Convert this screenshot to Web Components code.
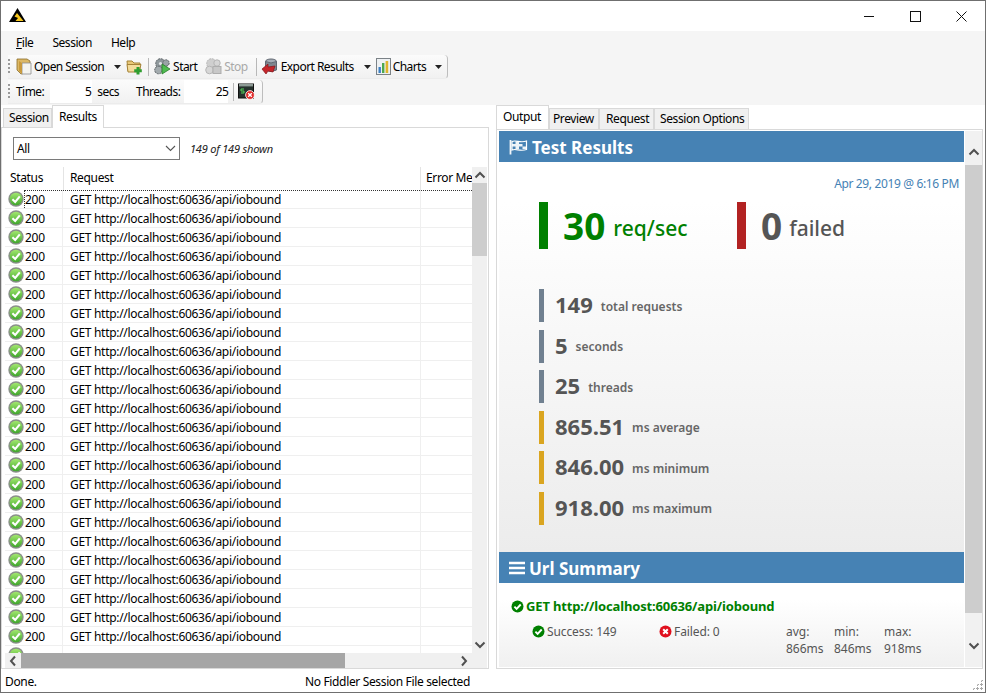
<!DOCTYPE html>
<html><head><meta charset="utf-8"><title>West Wind WebSurge</title>
<style>
html,body{margin:0;padding:0;background:#fff;font:12px "Noto Sans","Open Sans",sans-serif;color:#000}
</style></head><body>
<app-window></app-window>
<script>
const chev=(d,c='#505050',s=2)=>{const p={up:'M1.5 8.5 L6 4 L10.5 8.5',down:'M1.5 3.5 L6 8 L10.5 3.5',left:'M8 1.5 L4 6 L8 10.5',right:'M4 1.5 L8 6 L4 10.5'}[d];return `<svg width="12" height="12" viewBox="0 0 12 12"><path d="${p}" fill="none" stroke="${c}" stroke-width="${s}"/></svg>`};
const ICONS={
logo:`<svg width="17" height="16" viewBox="0 0 17 16"><path d="M8.5 1 L17 15 H0 Z" fill="#000"/><path d="M8 6 L14.5 14 H6.5 L9 11 L5.5 9.5 Z" fill="#f7c71e"/></svg>`,
open:`<svg width="16" height="17" viewBox="0 0 16 17"><path d="M1 1 H11 L14 3 V14 L5 16 L1 12 Z" fill="#dcb865" stroke="#8a6d2a" stroke-width=".8"/><path d="M6 5 H15 V16 H6 Z" fill="#f4f4ef" stroke="#8d8d8d" stroke-width=".8"/><path d="M3 3 L6 5 V16 L3 13 Z" fill="#c99a3c"/></svg>`,
add:`<svg width="17" height="16" viewBox="0 0 17 16"><path d="M1 2 H6 L8 4 H14 V12 H2 Z" fill="#e9c877" stroke="#a58338"/><path d="M1 5.5 H15 L13 13 H2 Z" fill="#f4dc9b" stroke="#a58338"/><path d="M12 8 V15.5 M8.2 11.7 H15.8" stroke="#2f9e2f" stroke-width="3"/></svg>`,
start:`<svg width="17" height="17" viewBox="0 0 17 17"><circle cx="6.5" cy="5.5" r="4.8" fill="#8f989c" stroke="#5b6265" stroke-dasharray="2 .8"/><circle cx="6.5" cy="5.5" r="1.6" fill="#e3e6e8"/><circle cx="4.5" cy="12" r="3.8" fill="#a3abae" stroke="#5b6265" stroke-dasharray="2 .8"/><circle cx="12" cy="5" r="3.2" fill="#9aa3a6" stroke="#5b6265" stroke-dasharray="2 .8"/><path d="M8 6 L16 11 L8 16 Z" fill="#4fbb50" stroke="#2a7d2b" stroke-width=".8"/></svg>`,
stop:`<svg width="17" height="17" viewBox="0 0 17 17"><circle cx="6.5" cy="5.5" r="4.8" fill="#cfcfcf" stroke="#b5b5b5" stroke-dasharray="2 .8"/><circle cx="12" cy="5" r="3.2" fill="#d6d6d6" stroke="#b5b5b5"/><circle cx="4.5" cy="12" r="3.8" fill="#d6d6d6" stroke="#b5b5b5"/><rect x="8" y="8.5" width="8" height="7" fill="#c8c8c8" stroke="#adadad"/></svg>`,
exp:`<svg width="17" height="17" viewBox="0 0 17 17"><ellipse cx="10" cy="3.5" rx="5.5" ry="2.5" fill="#a7aeb7" stroke="#5f6670"/><path d="M4.5 3.5 V12 Q10 15 15.5 12 V3.5 Q10 6.5 4.5 3.5" fill="#7f8790" stroke="#5f6670"/><path d="M1 11 L7 6 V9 L14 8 L12 14 L7 13 L5 16 Z" fill="#c4262b" stroke="#86161a" stroke-width=".7"/></svg>`,
charts:`<svg width="15" height="17" viewBox="0 0 15 17"><rect x=".5" y=".5" width="14" height="16" fill="#eef1f3" stroke="#7b8287"/><rect x="2.5" y="9" width="2.4" height="6" fill="#3b7fc4"/><rect x="6" y="5" width="2.4" height="10" fill="#4da84d"/><rect x="9.6" y="3" width="2.6" height="12" fill="#e0b52c"/></svg>`,
term:`<svg width="17" height="17" viewBox="0 0 17 17"><rect x=".5" y="1" width="15" height="14" fill="#26312d" stroke="#111"/><rect x="1" y="1" width="14" height="2.4" fill="#8d9a95"/><path d="M6 6 H3 V8 H6 V10 H3" stroke="#53d35a" fill="none"/><circle cx="12" cy="12" r="4.4" fill="#e02a2a" stroke="#fff" stroke-width=".8"/><path d="M10.2 10.2 L13.8 13.8 M13.8 10.2 L10.2 13.8" stroke="#fff" stroke-width="1.3"/></svg>`,
ok:`<svg width="16" height="16" viewBox="0 0 16 16"><defs><linearGradient id="g" x1="0" y1="0" x2="0" y2="1"><stop offset="0" stop-color="#a3e86f"/><stop offset="1" stop-color="#3fa62c"/></linearGradient></defs><circle cx="8" cy="8" r="7.7" fill="#8a8f8a"/><circle cx="8" cy="8" r="6.3" fill="url(#g)"/><path d="M4.4 8.2 L7.2 11 L11.8 5.4" fill="none" stroke="#fff" stroke-width="2.1"/></svg>`,
flag:`<svg width="19" height="16" viewBox="0 0 19 16"><path d="M1.5 1 V15.5" stroke="#f2f6fa" stroke-width="1.8"/><path d="M3 2.5 C7 .5 11 4.5 17.5 2 V10.5 C11 13 7 9 3 11 Z" fill="#4682b4" stroke="#fff" stroke-width="1.2"/><path d="M6.5 2.5 H10 V5 H13.5 V7.5 H17 V10 H13.5 V7.5 H10 V10 H6.5 V7.5 H3 V5 H6.5 Z" fill="#fff" opacity=".9"/></svg>`,
bars:`<svg width="16" height="14" viewBox="0 0 16 14"><path d="M0 2 H16 M0 7 H16 M0 12 H16" stroke="#fff" stroke-width="2.6"/></svg>`,
chk:c=>`<svg width="13" height="13" viewBox="0 0 13 13"><circle cx="6.5" cy="6.5" r="6" fill="${c}"/><path d="M3.4 6.6 L5.6 8.8 L9.7 4.5" fill="none" stroke="#fff" stroke-width="1.9"/></svg>`,
no:`<svg width="13" height="13" viewBox="0 0 13 13"><circle cx="6.5" cy="6.5" r="6" fill="#e0101e"/><path d="M4.2 4.2 L8.8 8.8 M8.8 4.2 L4.2 8.8" stroke="#fff" stroke-width="2"/></svg>`
};
function def(name,css,html,init){
  customElements.define(name,class extends HTMLElement{
    constructor(){super();const s=this.attachShadow({mode:'open'});
      s.innerHTML=`<style>${css}</style>`+(typeof html==='function'?html(this):html);
    }
    connectedCallback(){if(init)init(this)}
  });
}

def('ui-icon',':host{display:inline-flex;flex:none;align-items:center;justify-content:center}',
  h=>{const n=h.getAttribute('name');const c=h.getAttribute('color');return typeof ICONS[n]==='function'?ICONS[n](c):ICONS[n]});

def('title-bar',`:host{display:flex;height:30px;flex:none;background:#fff;align-items:center;position:relative}
.logo{margin:-3px 0 0 8px;display:flex}.sp{flex:1}
.b{width:46px;height:30px;display:flex;align-items:center;justify-content:center}`,
`<div class="logo"><ui-icon name="logo"></ui-icon></div><div class="sp"></div>
<div class="b"><svg width="10" height="10"><path d="M0 5.5H10" stroke="#111"/></svg></div>
<div class="b"><svg width="11" height="11"><rect x=".5" y=".5" width="10" height="10" fill="none" stroke="#111"/></svg></div>
<div class="b" style="margin-right:1px"><svg width="11" height="11"><path d="M.5 .5L10.5 10.5M10.5 .5L.5 10.5" stroke="#111"/></svg></div>`);

def('menu-bar',`:host{display:flex;height:24px;flex:none;background:#f5f5f5;align-items:center;padding:0 0 2px 15px;box-sizing:border-box;letter-spacing:-.45px}
span{margin-right:19px} u{text-decoration:underline}`,
`<span><u>F</u>ile</span><span>Session</span><span>Help</span>`);

def('tool-strip',`:host{display:flex;height:24px;box-sizing:border-box;align-items:center;background:linear-gradient(#fbfbfb,#f1f1f1);border-right:1px solid #bdbdbd;border-bottom:1px solid #ececec;border-radius:0 4px 4px 0;padding-left:8px;margin-left:7px;position:relative;letter-spacing:-.55px}
:host::before{content:"";position:absolute;left:0;top:4px;bottom:4px;width:2px;background:repeating-linear-gradient(#9a9a9a 0 2px,transparent 2px 4px)}`,
`<slot></slot>`);

def('tool-btn',`:host{display:inline-flex;align-items:center;flex:none;white-space:nowrap;height:22px}
.t{margin-left:var(--gap,3px)}`,
h=>`<ui-icon name="${h.getAttribute('icon')}"></ui-icon><span class="t" style="${h.hasAttribute('disabled')?'color:#a9a9a9':''}"><slot></slot></span>${h.hasAttribute('drop')?'<svg width="7" height="4" style="margin-left:'+h.getAttribute('drop')+'px"><path d="M0 0H7L3.5 4Z" fill="#222"/></svg>':''}`);

def('tool-sep',`:host{display:inline-block;flex:none;width:1px;height:18px;background:#b8b8b8}`,``);

def('num-box',`:host{display:inline-block;flex:none;background:#fff;height:23px;line-height:23px;text-align:right;box-sizing:border-box;padding-right:1px}`,`<slot></slot>`);

def('tab-btn',`:host{display:block;flex:none;box-sizing:border-box;border:1px solid #d9d9d9;border-bottom:0;background:#f0f0f0;height:21px;line-height:20px;padding:0 0 0 5px;margin-top:3px;letter-spacing:-.4px}
:host([active]){background:#fff;height:24px;margin-top:0;line-height:21px;position:relative;z-index:2;margin-bottom:-1px;padding-left:6px}`,`<slot></slot>`);

def('scroll-v',`:host{display:flex;flex-direction:column;flex:none;width:var(--w,15px);background:var(--bg,#f0f0f0)}
.a{height:var(--ah,16px);display:flex;align-items:center;justify-content:center;flex:none;box-sizing:border-box}
.u{padding-top:var(--off,0)}.d{padding-bottom:var(--off,0)}
.th{background:#cdcdcd;flex:none}.sp{flex:1}`,
h=>`<div class="a u">${chev('up')}</div><div class="th" style="height:${h.getAttribute('thumb')}px"></div><div class="sp"></div><div class="a d">${chev('down')}</div>`);

def('status-row',`:host{display:grid;grid-template-columns:58px 357px 52px;height:19px;box-sizing:border-box;border-bottom:1px solid #efefef;align-items:center;white-space:nowrap;letter-spacing:-.3px;position:relative}
.s{display:flex;align-items:center;padding-left:3px;gap:1px;height:18px;box-sizing:border-box;border-right:1px solid #efefef}
.r{padding:1px 0 0 7px;height:18px;line-height:18px;box-sizing:border-box}
.e{height:18px;border-left:1px solid #efefef}
:host([partial]) span,:host([partial]) .r{visibility:hidden}
:host([focus])::before{content:"";position:absolute;left:19px;right:0;top:0;border-top:1px dotted #333}
:host([focus])::after{content:"";position:absolute;left:19px;top:0;bottom:0;border-left:1px dotted #333}`,
`<div class="s"><ui-icon name="ok"></ui-icon><span>200</span></div><div class="r">GET http://localhost:60636/api/iobound</div><div class="e"></div>`);

def('results-list',`:host{display:flex;flex:1;flex-direction:column;min-height:0;min-width:0;background:#fff}
.hd{display:grid;grid-template-columns:58px 357px 52px;height:23px;flex:none;letter-spacing:var(--ls);white-space:nowrap}
.hd div{height:23px;line-height:21px;padding-left:5px;box-sizing:border-box;overflow:hidden}
.hd div+div{border-left:1px solid #e4e4e4;padding-left:6px}
.hd div:last-child{padding-left:5px}
.rows{flex:1;overflow:hidden;min-height:0}
`,
`<div class="hd"><div>Status</div><div>Request</div><div>Error Me</div></div><div class="rows"><slot></slot></div>`);

def('results-pane',`:host{display:flex;flex-direction:column;width:488px;flex:none;min-height:0}
.tabs{display:flex;height:22px;flex:none;padding-left:2px}
.tabs tab-btn:first-child{width:49px;height:19px;line-height:18px}.tabs tab-btn:last-child{width:52px;height:23px}
.box{flex:1;border:1px solid #d9d9d9;display:flex;flex-direction:column;min-height:0;background:#fff}
.flt{height:39px;flex:none;display:flex;align-items:center;padding-left:11px;padding-top:2px;box-sizing:border-box}
.cmb{width:167px;height:23px;box-sizing:border-box;border:1px solid #7a7a7a;display:flex;align-items:center;justify-content:space-between;padding:0 3px;letter-spacing:var(--ls)}
.n{font-style:italic;font-size:11px;margin-left:10px;color:#222;letter-spacing:-.2px}
.lv{flex:1;display:flex;flex-direction:column;min-height:0;padding:0 1px 0 3px}
.top{flex:1;display:flex;min-height:0}
.hs{height:15px;flex:none;background:#f0f0f0;display:flex;align-items:center;padding-right:15px}
.hs .a{width:16px;height:15px;display:flex;align-items:center;justify-content:center;flex:none}
.hs .th{width:324px;height:15px;background:#a6a6a6}.hs .sp{flex:1}`,
`<div class="tabs"><tab-btn>Session</tab-btn><tab-btn active>Results</tab-btn></div>
<div class="box"><div class="flt"><div class="cmb"><span>All</span><svg width="11" height="7"><path d="M1 1L5.5 5.5L10 1" fill="none" stroke="#555" stroke-width="1.1"/></svg></div><span class="n">149 of 149 shown</span></div>
<div class="lv"><div class="top"><results-list><slot></slot></results-list><scroll-v thumb="73"></scroll-v></div><div class="hs"><div class="a">${chev('left')}</div><div class="th"></div><div class="sp"></div><div class="a">${chev('right')}</div></div></div></div>`);

def('big-stat',`:host{display:flex;align-items:center;height:47px;box-sizing:border-box;border-left:9px solid var(--c);padding-left:15px;white-space:nowrap;color:var(--t)}
b{font-size:37px;font-weight:700;line-height:47px}
span{font-size:21px;font-weight:500;margin-left:var(--g,8px);margin-top:5px}`,
h=>`<b>${h.getAttribute('n')}</b><span>${h.getAttribute('l')}</span>`);

def('small-stat',`:host{display:flex;align-items:center;height:33px;box-sizing:border-box;border-left:5px solid var(--c);padding-left:11px;white-space:nowrap;color:#555;margin-bottom:7.5px;width:max-content;min-width:200px}
b{font-size:22px;font-weight:700;margin-bottom:3px}
span{font-size:12px;font-weight:600;margin-left:8px;margin-top:1px;color:#666}`,
h=>`<b>${h.getAttribute('n')}</b><span>${h.getAttribute('l')}</span>`);

def('report-head',`:host{display:flex;align-items:center;height:31px;flex:none;background:#4682b4;color:#fff;font-size:17px;font-weight:700;padding-left:10px;gap:4px;white-space:nowrap}
span{padding-top:2px}`,
h=>`<ui-icon name="${h.getAttribute('icon')}"></ui-icon><span><slot></slot></span>`);

def('url-summary',`:host{display:block;flex:1;background:linear-gradient(#fff 20%,#f0f0f0);color:#555;overflow:hidden;min-height:0}
.u{display:flex;align-items:center;gap:2px;color:#008000;font-weight:700;font-size:13px;margin:14px 0 0 12px;white-space:nowrap;letter-spacing:-.15px}
.g{display:grid;grid-template-columns:127px 127px 48px 50px 60px;margin:8px 0 0 33px;line-height:17px;white-space:nowrap}
.i{display:flex;align-items:center;gap:2px;height:17px;letter-spacing:-.1px}
`,`<div class="u"><ui-icon name="chk" color="#008000"></ui-icon>GET http://localhost:60636/api/iobound</div>
<div class="g"><div class="i"><ui-icon name="chk" color="#008000"></ui-icon>Success: 149</div><div class="i"><ui-icon name="no"></ui-icon>Failed: 0</div><div>avg:<br>866ms</div><div>min:<br>846ms</div><div>max:<br>918ms</div></div>`);

def('report-view',`:host{display:flex;flex:1;min-width:0;min-height:0;background:#fff}
.m{flex:1;display:flex;flex-direction:column;min-width:0;margin-right:1px}
.tr{height:390px;flex:none;background:linear-gradient(#fff 10%,#ececec);box-sizing:border-box;padding:0 5px 0 40px}
.dt{color:#4682b4;text-align:right;height:40px;line-height:43px;white-space:nowrap;letter-spacing:-.36px}
.bg{display:flex;height:47px}.bg big-stat:first-child{width:198px}
.sm{margin-top:40px}`,
`<div class="m"><report-head icon="flag">Test Results</report-head>
<div class="tr"><div class="dt">Apr 29, 2019 @ 6:16 PM</div>
<div class="bg"><big-stat n="30" l="req/sec" style="--c:#008000;--t:#008000"></big-stat><big-stat n="0" l="failed" style="--c:#b22222;--t:#555;--g:7px"></big-stat></div>
<div class="sm">
<small-stat n="149" l="total requests" style="--c:#708090"></small-stat>
<small-stat n="5" l="seconds" style="--c:#708090"></small-stat>
<small-stat n="25" l="threads" style="--c:#708090"></small-stat>
<small-stat n="865.51" l="ms average" style="--c:#daa520"></small-stat>
<small-stat n="846.00" l="ms minimum" style="--c:#daa520"></small-stat>
<small-stat n="918.00" l="ms maximum" style="--c:#daa520"></small-stat>
</div></div>
<report-head icon="bars">Url Summary</report-head><url-summary></url-summary></div>
<scroll-v thumb="448" style="--w:17px;--bg:#f1f1f1;--ah:34px;--off:8px"></scroll-v>`);

def('report-pane',`:host{display:flex;flex-direction:column;flex:none;width:487px;margin-left:7px;min-height:0}
.tabs{display:flex;height:24px;flex:none}
.box{flex:1;border:1px solid #d9d9d9;padding:1px 0 1px 2px;display:flex;min-height:0;background:#fff}`,
`<div class="tabs"><tab-btn active style="width:53px">Output</tab-btn><tab-btn style="width:50px;padding-left:3px">Preview</tab-btn><tab-btn style="width:55px;padding-left:6px">Request</tab-btn><tab-btn style="width:95px">Session Options</tab-btn></div><div class="box"><report-view></report-view></div>`);

def('status-bar',`:host{display:flex;flex:none;height:23px;align-items:center;padding:2px 515px 0 4px;box-sizing:border-box;position:relative;letter-spacing:var(--ls);background:#fff}
.b{margin-left:auto}
.g{position:absolute;right:2px;bottom:2px;width:11px;height:11px;background:radial-gradient(circle at 1.5px 1.5px,#a8a8a8 1.3px,transparent 1.4px) 0 0/4px 4px;clip-path:polygon(100% 0,100% 100%,0 100%)}`,
`<span>Done.</span><span class="b">No Fiddler Session File selected</span><div class="g"></div>`);

def('app-window',`:host{display:flex;flex-direction:column;width:986px;height:693px;box-sizing:border-box;border:1px solid #6f6f6f;background:#fff;overflow:hidden;--ls:-.35px}
.tb{background:#f5f5f5;height:50px;flex:none;display:flex;flex-direction:column;gap:1px}
.r1{width:440px}.r2{width:255px}
.main{flex:1;display:flex;min-height:0;background:#fff}`,
`<title-bar></title-bar><menu-bar></menu-bar>
<div class="tb">
<tool-strip class="r1">
<tool-btn icon="open" drop="10" style="--gap:2px">Open Session</tool-btn>
<tool-btn icon="add" style="margin-left:5px;--gap:0"></tool-btn>
<tool-sep style="margin-left:5px"></tool-sep>
<tool-btn icon="start" style="margin-left:5px;--gap:2px">Start</tool-btn>
<tool-btn icon="stop" disabled style="margin-left:8px;--gap:2px">Stop</tool-btn>
<tool-sep style="margin-left:8px"></tool-sep>
<tool-btn icon="exp" drop="10" style="margin-left:4px">Export Results</tool-btn>
<tool-btn icon="charts" drop="9" style="margin-left:5px;--gap:2px">Charts</tool-btn>
</tool-strip>
<tool-strip class="r2">
<span>Time:</span><num-box style="width:42px;margin-left:6px">5</num-box><span style="margin-left:5px">secs</span><span style="margin-left:17px">Threads:</span><num-box style="width:44px;margin-left:4px;padding-right:0">25</num-box><tool-sep style="margin-left:5px"></tool-sep><ui-icon name="term" style="margin-left:4px"></ui-icon>
</tool-strip>
</div>
<div class="main"><results-pane id="rp"></results-pane><report-pane></report-pane></div>
<status-bar></status-bar>`,
h=>{const rp=h.shadowRoot.getElementById('rp');if(rp.childElementCount)return;
 for(let i=0;i<25;i++){const r=document.createElement('status-row');if(i==0)r.setAttribute('focus','');if(i==24)r.setAttribute('partial','');rp.appendChild(r);}});
</script>
</body></html>
